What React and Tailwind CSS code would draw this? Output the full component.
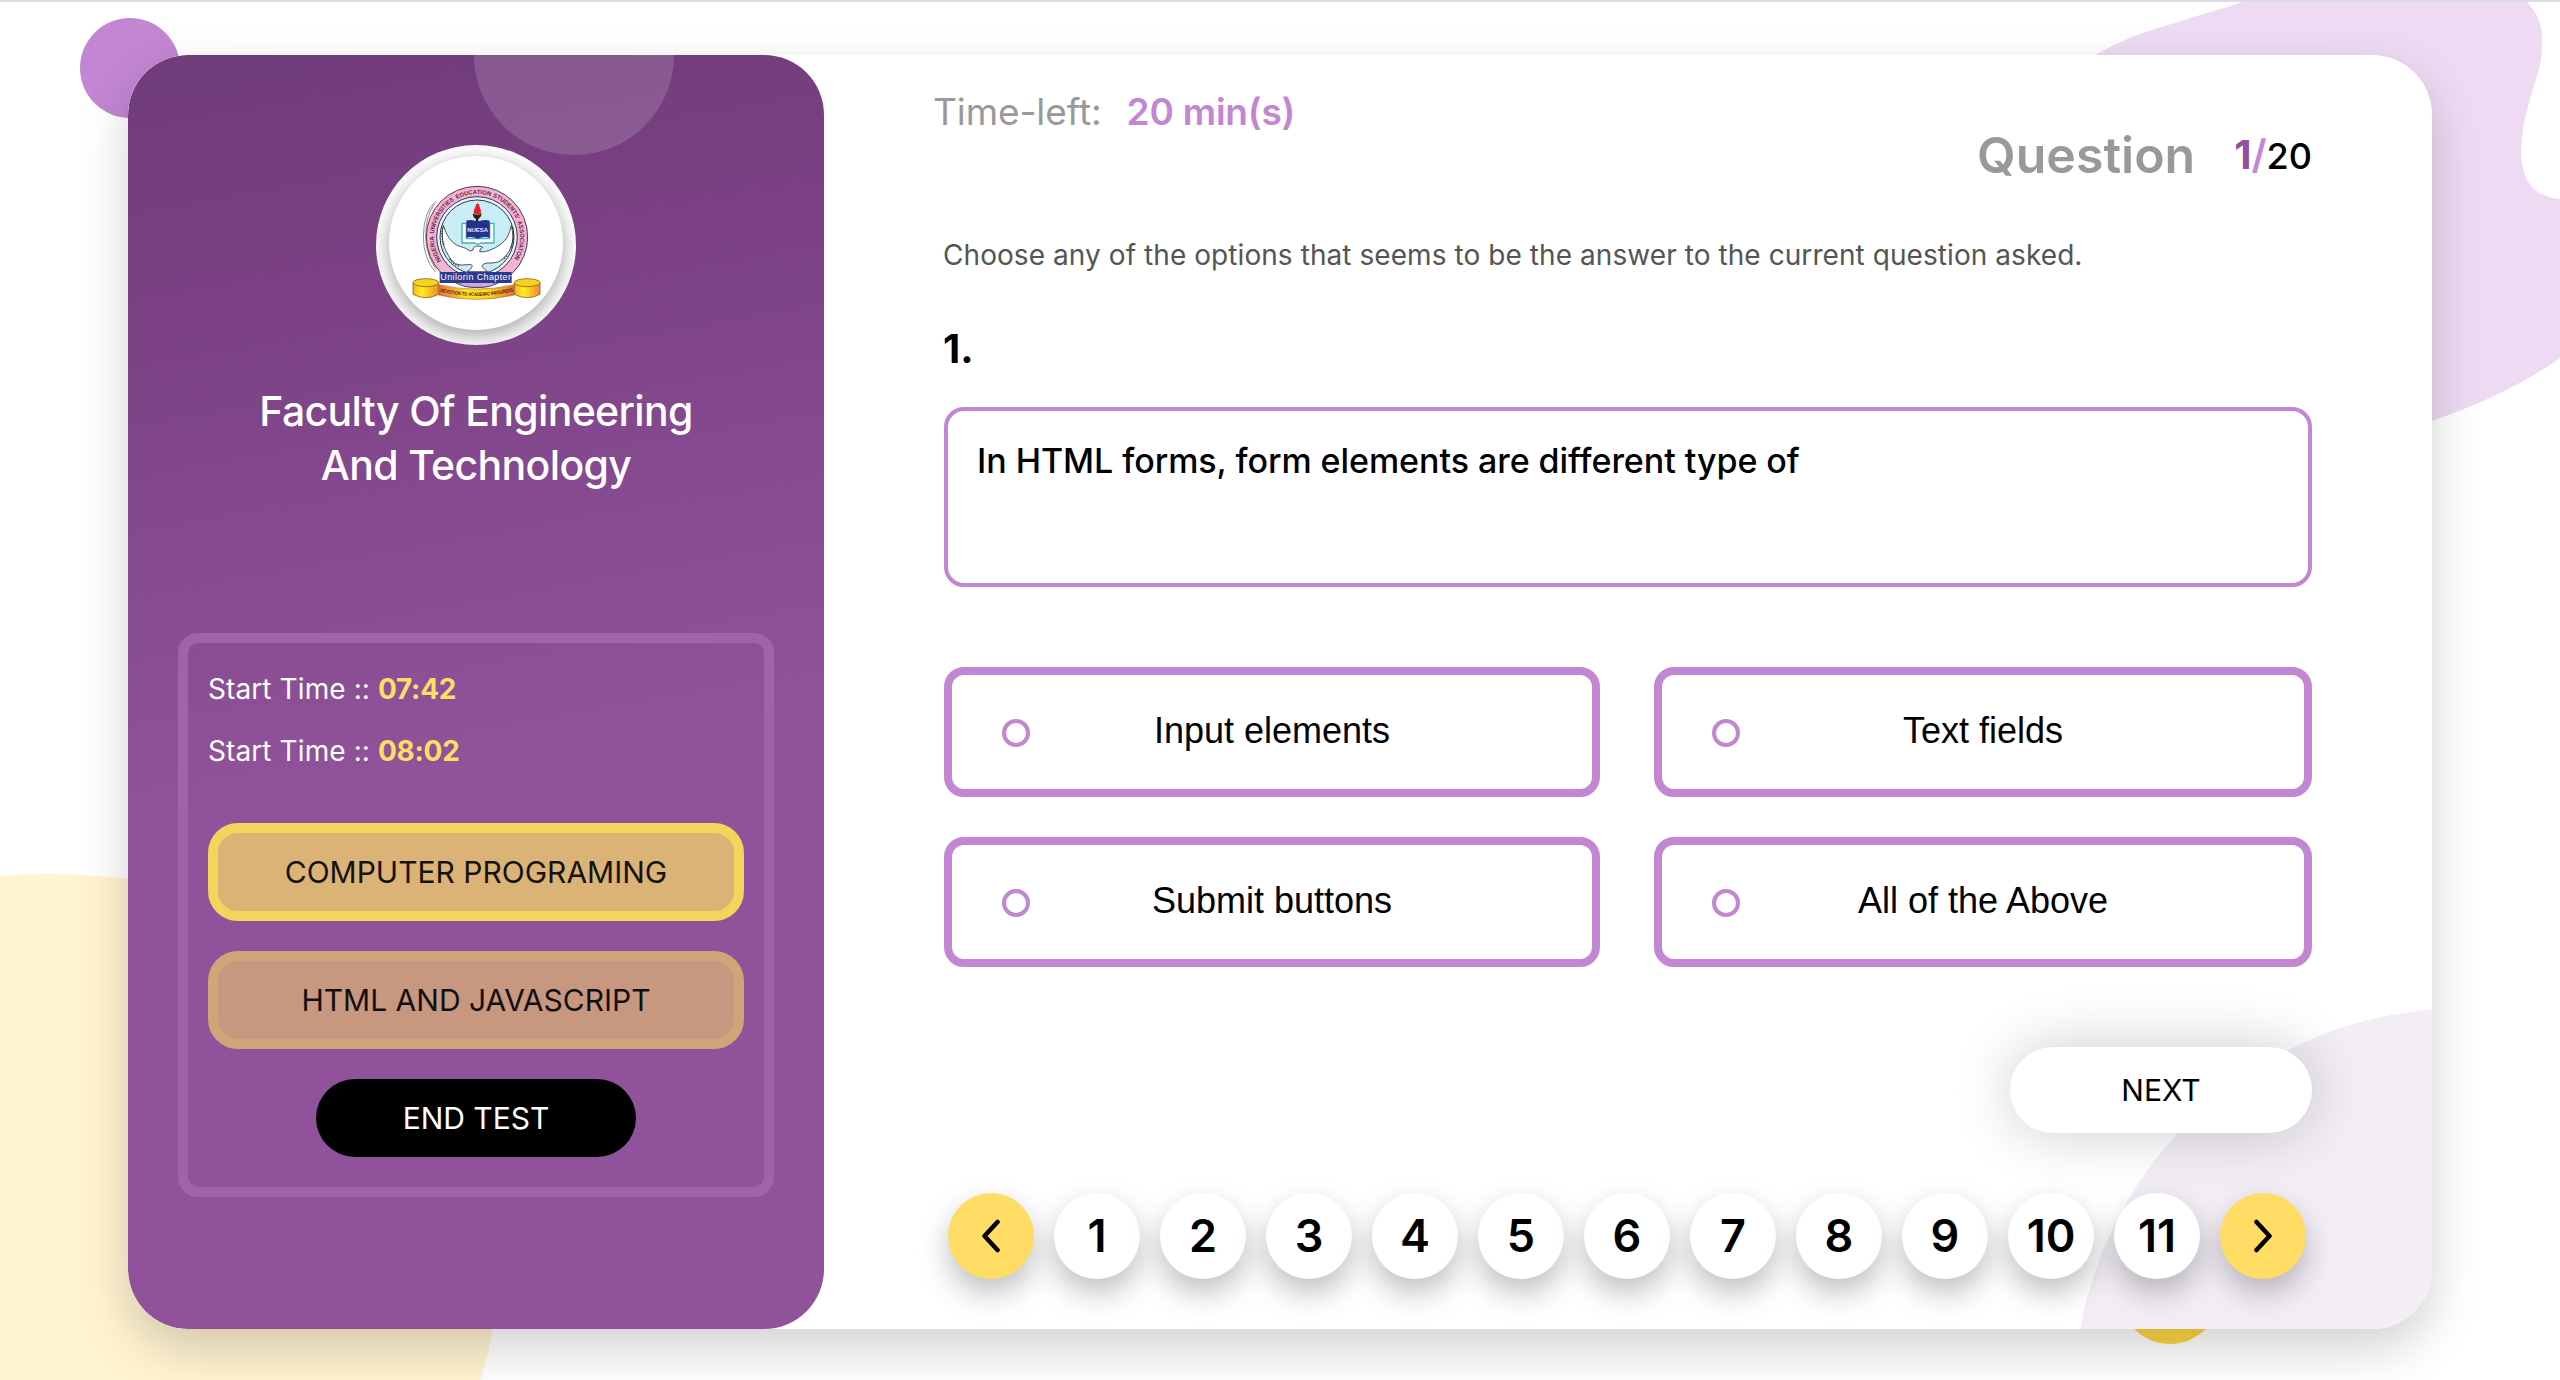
import React from "react";

const OPTIONS = ["Input elements", "Text fields", "Submit buttons", "All of the Above"];
const PAGES = ["1", "2", "3", "4", "5", "6", "7", "8", "9", "10", "11"];

const RING_WORDS = [
  { word: "NIGERIA", at: 0, length: 79 },
  { word: "UNIVERSITIES", at: 86, length: 121 },
  { word: "EDUCATION", at: 216, length: 104 },
  { word: "STUDENTS'", at: 326, length: 102 },
  { word: "ASSOCIATON", at: 434, length: 115 },
];

function Crest() {
  return (
    <svg viewBox="86 77 522 522" className="size-[174px]">
      <defs>
        <path id="ring-text" d="M243 392 A129 129 0 1 1 459.4 388.4" />
        <path id="ribbon-text" d="M239 484 Q349 510 460 483" />
        <linearGradient id="roll" x1="0" x2="1">
          <stop offset="0" stopColor="#f7b21a" />
          <stop offset="0.35" stopColor="#fff01e" />
          <stop offset="1" stopColor="#f08a2a" />
        </linearGradient>
        <linearGradient id="band" x1="0" x2="1">
          <stop offset="0" stopColor="#ee6a35" />
          <stop offset="0.35" stopColor="#fde21c" />
          <stop offset="0.65" stopColor="#fbd81d" />
          <stop offset="1" stopColor="#ee6a35" />
        </linearGradient>
      </defs>
      <path d="M228 212 Q190 240 189 320 Q190 385 225 425 M222 222 Q196 255 196 320 Q198 375 228 418" fill="none" stroke="#555" strokeWidth="2" />
      <circle cx="350" cy="320" r="152" fill="#f4b3d4" stroke="#4b3a48" strokeWidth="3" />
      <circle cx="350" cy="320" r="121" fill="#e9f7fc" stroke="#2d3a4a" strokeWidth="3" />
      <circle cx="350" cy="320" r="111" fill="#c9ecf7" stroke="#2d3a4a" strokeWidth="3" />
      {RING_WORDS.map(({ word, at, length }) => (
        <text key={word} fontFamily="Liberation Sans, sans-serif" fontWeight="700" fontSize="18.5" fill="#5c2a50">
          <textPath href="#ring-text" startOffset={at} textLength={length} lengthAdjust="spacingAndGlyphs">
            {word}
          </textPath>
        </text>
      ))}
      <path d="M305 279 H318 V325 H388 V279 H401 V338 H362 Q352 344 343 338 H305 Z" fill="#fff" stroke="#3fb3b8" strokeWidth="4" />
      <path d="M318 271 Q335 266 352 274 Q370 266 388 271 V322 Q370 317 352 325 Q335 317 318 322 Z" fill="#26308f" />
      <text x="352" y="304" textAnchor="middle" fontFamily="Liberation Sans, sans-serif" fontWeight="700" fontSize="18" fill="#e8eaff" textLength="62">
        NUESA
      </text>
      <path d="M337 250 Q350 256 364 250 Q362 262 354 266 V275 H347 V266 Q338 262 337 250 Z" fill="#231f20" />
      <path d="M340 251 Q340 236 345 230 Q347 220 352 219 Q358 221 358 230 Q363 238 362 251 Q351 255 340 251 Z" fill="#e8222c" />
      <path
        d="M249 285 Q262 330 290 345 Q318 353 330 362 Q339 362 340 352 Q350 342 367 351 Q358 354 358 364 Q372 366 388 360 Q425 345 440 322 Q450 303 453 286 Q463 322 452 350 L447 362 L438 374 L428 385 L416 394 Q398 400 380 398 Q366 400 365 408 Q372 418 382 424 H320 Q332 418 336 408 Q336 401 322 403 Q300 407 285 400 L272 388 L264 375 L256 360 L249 342 Q243 320 249 285 Z"
        fill="#fff"
        stroke="#333"
        strokeWidth="2.5"
        strokeLinejoin="round"
      />
      <path d="M246 292 q-4 30 6 54 M268 385 q14 20 28 22 M458 292 q5 34 -8 64 M440 376 l-12 12" fill="none" stroke="#333" strokeWidth="4" strokeDasharray="4 4" />
      <ellipse cx="350" cy="461" rx="52" ry="10" fill="#d9a5d6" stroke="#26308f" strokeWidth="2" />
      <path d="M235 463 Q349 490 462 463 V494 Q349 520 235 494 Z" fill="url(#band)" stroke="#a8702a" strokeWidth="2" />
      <text fontFamily="Liberation Sans, sans-serif" fontWeight="700" fontSize="15" fill="#3b2410">
        <textPath href="#ribbon-text" textLength="222" lengthAdjust="spacingAndGlyphs">
          DEVOTION TO ACADEMIC PROGRESS
        </textPath>
      </text>
      <rect x="238" y="425" width="216" height="33" fill="#2b3990" />
      <text x="346" y="450" textAnchor="middle" fontFamily="Liberation Sans, sans-serif" fontSize="27" fill="#fff" textLength="212">
        Unilorin Chapter
      </text>
      {[158, 462].map((x) => (
        <g key={x} stroke="#8a6420" strokeWidth="2.5">
          <path d={`M${x} 457 V492 Q${x + 39} 512 ${x + 77} 492 V457 Z`} fill="url(#roll)" />
          <ellipse cx={x + 38.5} cy="457" rx="38.5" ry="12" fill="#f6d321" />
        </g>
      ))}
    </svg>
  );
}

function Backdrop() {
  return (
    <svg viewBox="0 0 2560 1380" className="absolute inset-0 h-full w-full">
      <circle cx="130" cy="68" r="50" fill="#c386d3" />
      <circle cx="2170" cy="1294" r="50" fill="#ffd644" />
      <path d="M0 876 Q60 871 128 879 C380 900 540 1100 493 1329 Q489 1354 480 1380 H0 Z" fill="#fff3d0" />
      <path
        d="M2095 55 Q2115 44 2139 34 Q2190 18 2243 2 L2260 -6 H2522 L2527 2 Q2544 20 2542 44 Q2542 62 2536 79 Q2530 98 2525 118 Q2521 138 2521 156 Q2522 170 2528 182 Q2538 197 2560 199 V358 Q2510 394 2432 421 L2300 440 L2095 120 Z"
        fill="#eedaf3"
      />
    </svg>
  );
}

function Sidebar() {
  return (
    <aside className="relative flex w-[696px] shrink-0 flex-col items-center overflow-hidden rounded-[60px] bg-[linear-gradient(170deg,#703c7a_0%,#7a4083_18%,#90539b_55%,#90539b_100%)] pt-[90px]">
      <div className="absolute -top-[100px] left-[346px] size-[200px] rounded-full bg-white/15" />
      <div className="relative flex size-[200px] items-start justify-center overflow-hidden rounded-full bg-white pt-[11px]">
        <div className="size-[174px] overflow-hidden rounded-full bg-white shadow-[0_6px_20px_rgba(0,0,0,0.36)]">
          <Crest />
        </div>
      </div>
      <h1 className="mt-[39px] text-center text-[41px] leading-[54px] font-medium tracking-[-0.65px] text-white">
        Faculty Of Engineering
        <br />
        And Technology
      </h1>
      <div className="mt-[141px] flex h-[564px] w-[596px] flex-col items-center rounded-[20px] border-[10px] border-[#9f62ab] px-5 pt-[29px]">
        <p className="w-full text-[28px] leading-[34px] tracking-[0.1px] text-white">
          Start Time :: <span className="font-bold tracking-[-0.3px] text-[#ffdd65]">07:42</span>
        </p>
        <p className="mt-7 w-full text-[28px] leading-[34px] tracking-[0.1px] text-white">
          Start Time :: <span className="font-bold tracking-[-0.3px] text-[#ffdd65]">08:02</span>
        </p>
        <button className="mt-[55px] h-[98px] w-full rounded-[30px] border-[10px] border-[#f5d45c] bg-[#dcb377] text-[30px] text-[#15120d]">
          COMPUTER PROGRAMING
        </button>
        <button className="mt-[30px] h-[98px] w-full rounded-[30px] border-[10px] border-[#d1a578] bg-[#c7977f] text-[30px] text-[#130e0e]">
          HTML AND JAVASCRIPT
        </button>
        <button className="mt-[30px] h-[78px] w-[320px] rounded-[39px] bg-black text-[30px] text-white">END TEST</button>
      </div>
    </aside>
  );
}

function Arrow({ d }) {
  return (
    <svg viewBox="0 0 20 34" className="h-[34px] w-5" fill="none" stroke="#000" strokeWidth="4.5" strokeLinecap="round" strokeLinejoin="round">
      <path d={d} />
    </svg>
  );
}

const round = "flex size-[86px] items-center justify-center rounded-full shadow-[0_14px_30px_rgba(0,0,0,0.25)]";

function Quiz() {
  return (
    <main className="relative flex-1 px-[120px] pt-[35px]">
      <div className="relative flex h-[95px] items-start justify-between">
        <div className="-ml-[11px] flex gap-[25px] leading-[44px]">
          <span className="text-[37px] tracking-[-0.1px] text-[#999]">Time-left:</span>
          <span className="text-[37px] font-semibold tracking-[-0.2px] text-[#c386d3]">20 min(s)</span>
        </div>
        <div className="mt-[35px] flex gap-[39px] leading-[60px]">
          <span className="text-[50px] font-semibold text-[#999]">Question</span>
          <span className="text-[36px] font-medium text-black">
            <span className="text-[40px] font-bold text-[#914f9c]">1</span>
            <span className="text-[40px] font-semibold text-[#c386d3]">/</span>20
          </span>
        </div>
      </div>
      <p className="relative mt-[53px] -ml-px text-[28px] leading-[34px] tracking-[0.07px] whitespace-nowrap text-[#555]">
        Choose any of the options that seems to be the answer to the current question asked.
      </p>
      <p className="relative mt-[53px] -ml-px text-[40px] leading-[48px] font-bold text-black">1.</p>
      <div className="relative mt-[34px] h-[180px] rounded-[20px] border-4 border-[#c386d3] px-[29px] pt-[28px] text-[34px] leading-[44px] font-medium tracking-[-0.05px] text-black">
        In HTML forms, form elements are different type of
      </div>
      <div className="relative mt-20 grid grid-cols-[656px_658px] justify-between gap-y-10">
        {OPTIONS.map((label) => (
          <label
            key={label}
            className="grid h-[130px] grid-cols-[78px_1fr_78px] items-center rounded-[20px] border-8 border-[#c386d3] font-['Liberation_Sans',Arial,sans-serif] text-[36px] leading-[44px] text-black"
          >
            <span className="mt-0.5 size-7 justify-self-end rounded-full border-4 border-[#c386d3]" />
            <span className="-mt-0.5 text-center">{label}</span>
          </label>
        ))}
      </div>
      <div className="relative mt-20 flex justify-end">
        <button className="h-[86px] w-[302px] rounded-[43px] bg-white text-[30px] text-black shadow-[0_0_60px_rgba(0,0,0,0.2)]">
          NEXT
        </button>
      </div>
      <div className="relative mt-[60px] flex gap-5 pl-1">
        <button className={`${round} bg-[#ffdd65]`}>
          <Arrow d="M16.5 3 L3.5 17 L16.5 31" />
        </button>
        {PAGES.map((n) => (
          <button key={n} className={`${round} bg-white text-[45px] font-semibold text-black`}>
            {n}
          </button>
        ))}
        <button className={`${round} bg-[#ffdd65]`}>
          <Arrow d="M3.5 3 L16.5 17 L3.5 31" />
        </button>
      </div>
    </main>
  );
}

export default function App() {
  return (
    <div className="relative h-[1380px] w-[2560px] overflow-hidden bg-white font-[Inter,sans-serif]">
      <Backdrop />
      <div className="relative h-[2px] bg-[#dddce2]" />
      <div className="relative mx-auto mt-[53px] h-[1274px] w-[2304px] rounded-[60px] shadow-[0_20px_50px_rgba(0,0,0,0.18)]">
        <div className="relative flex h-full overflow-hidden rounded-[60px] bg-white">
          <div className="absolute top-[953px] left-[1946px] size-[780px] rounded-full bg-[#f3eef6]" />
          <Sidebar />
          <Quiz />
        </div>
      </div>
    </div>
  );
}
